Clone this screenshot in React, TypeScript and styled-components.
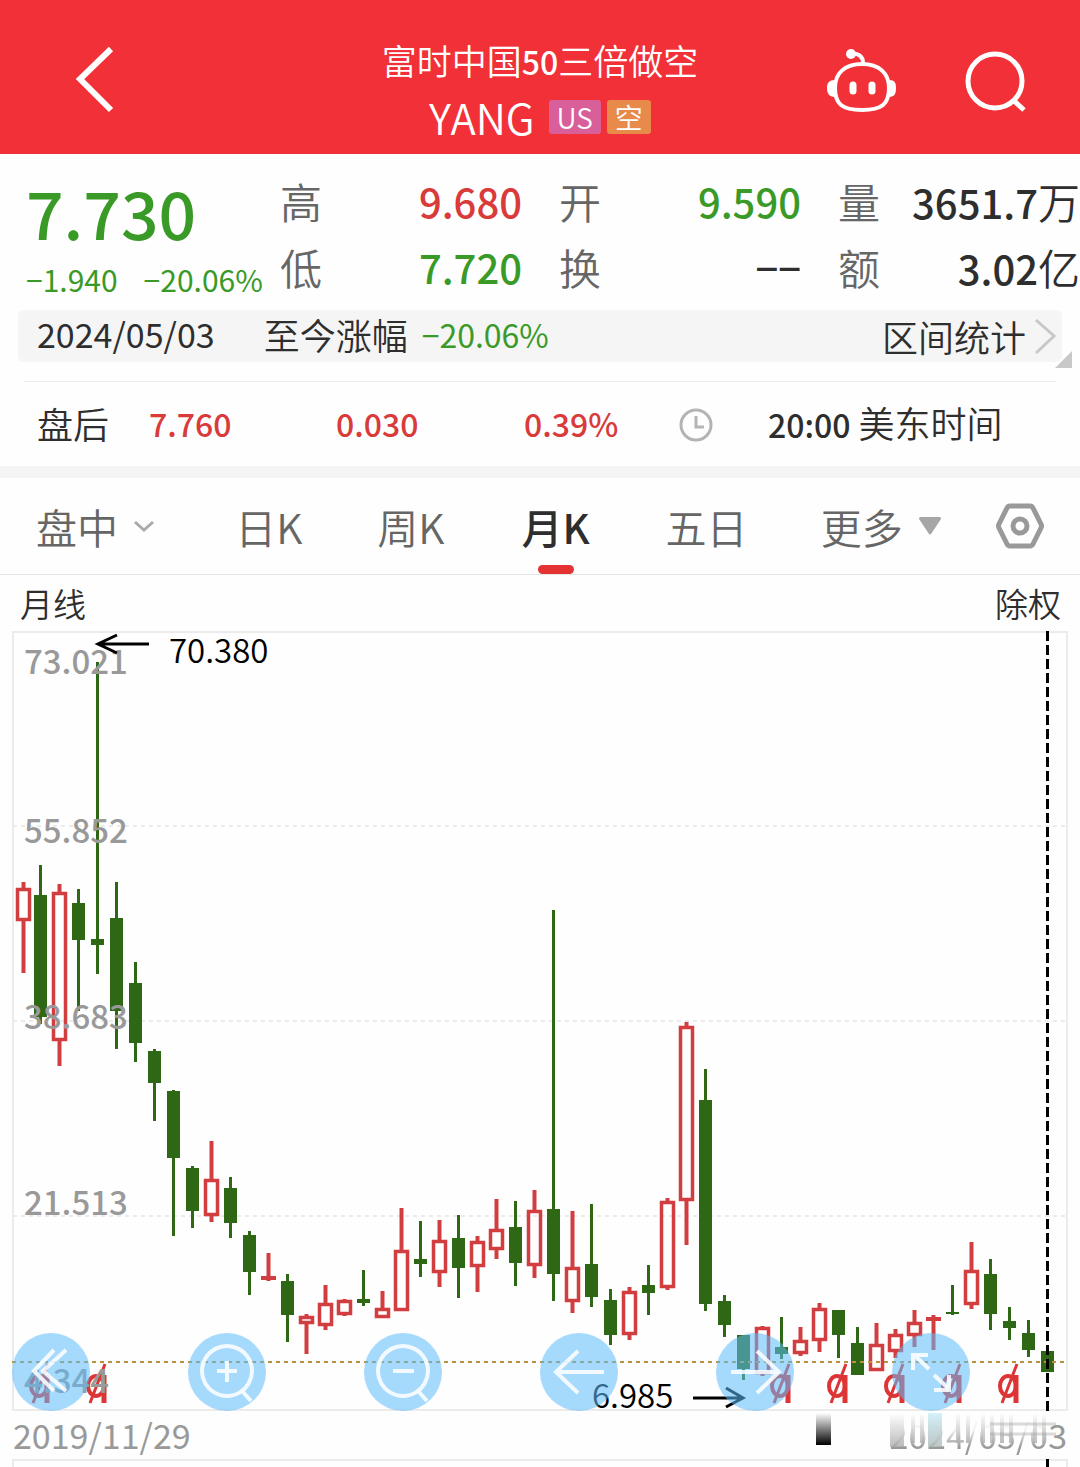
import React from "react";
import styled, { createGlobalStyle } from "styled-components";

const RED = "#d93a3a";
const GREEN = "#3a9a28";
const INK = "#2e2e2e";
const MUTED = "#666";

const GlobalStyle = createGlobalStyle`
  * { box-sizing: border-box; }
  body {
    margin: 0;
    background: #fefefe;
    color: ${INK};
    font-family: "Noto Sans CJK SC", "Noto Sans", sans-serif;
    font-weight: 350;
  }
  button {
    margin: 0;
    padding: 0;
    border: 0;
    background: none;
    color: inherit;
    font: inherit;
    cursor: pointer;
  }
  svg { display: block; }
`;

const Page = styled.div`
  width: 100%;
  overflow-x: hidden;
`;

/* ---------- header ---------- */

const Header = styled.header`
  display: grid;
  grid-template-columns: 1fr auto 1fr;
  align-items: center;
  height: 154px;
  padding: 8px 52px 0;
  background: #f23037;
  color: #fff;
`;

const BackArea = styled.div`
  padding-left: 20px;
`;

const HeaderActions = styled.div`
  display: flex;
  justify-content: flex-end;
  align-items: center;
  gap: 66px;
`;

const TitleBlock = styled.div`
  display: flex;
  flex-direction: column;
  align-items: center;
  padding-top: 18px;
`;

const Title = styled.h1`
  margin: 0;
  font-size: 35px;
  line-height: 52px;
  font-weight: 350;
`;

const TitleNumber = styled.span`
  font-size: 32px;
  font-weight: 500;
`;

const TickerRow = styled.div`
  display: flex;
  align-items: center;
  gap: 6px;
  height: 60px;
`;

const Ticker = styled.span`
  margin-right: 8px;
  font-size: 42px;
  line-height: 60px;
`;

const Badge = styled.span<{ $bg: string }>`
  padding: 0 8px;
  border-radius: 3px;
  background: ${(p) => p.$bg};
  font-size: 28px;
  line-height: 34px;
`;

/* ---------- quote ---------- */

const Quote = styled.section`
  display: grid;
  grid-template-columns: 280px 1fr;
  height: 156px;
  padding-top: 14px;
`;

const PriceBlock = styled.div`
  padding-left: 26px;
  color: ${GREEN};
  font-weight: 500;
  white-space: nowrap;
`;

const Price = styled.div`
  font-size: 66px;
  line-height: 86px;
`;

const Changes = styled.div`
  display: flex;
  gap: 26px;
  font-size: 30px;
  line-height: 50px;
  font-weight: 400;
`;

const Stats = styled.dl`
  display: grid;
  grid-template-columns: repeat(3, 1fr);
  grid-auto-rows: 66px;
  column-gap: 37px;
  margin: 0;
`;

const Stat = styled.div`
  display: flex;
  justify-content: space-between;
  align-items: center;
  white-space: nowrap;
`;

const StatLabel = styled.dt`
  color: ${MUTED};
  font-size: 42px;
  line-height: 66px;
`;

const StatValue = styled.dd<{ $color: string }>`
  margin: 0;
  color: ${(p) => p.$color};
  font-size: 40px;
  line-height: 66px;
  font-weight: 500;
`;

const Unit = styled.span`
  font-size: 42px;
  font-weight: 350;
`;

/* ---------- range bar ---------- */

const RangeArea = styled.div`
  position: relative;
  padding: 0 18px 19px;
`;

const RangeBar = styled.div`
  display: flex;
  align-items: center;
  height: 52px;
  padding: 0 6px 0 19px;
  border-radius: 6px;
  background: #f5f5f5;
  font-size: 36px;
  line-height: 48px;
`;

const RangeDate = styled.time`
  padding-bottom: 4px;
  margin-right: 49px;
  font-size: 34px;
  font-weight: 400;
`;

const RangeLabel = styled.span`
  padding-bottom: 4px;
`;

const RangeChange = styled.span`
  padding-bottom: 4px;
  margin-left: 14px;
  color: ${GREEN};
  font-size: 32px;
  font-weight: 400;
`;

const RangeButton = styled.button`
  display: flex;
  align-items: center;
  gap: 8px;
  margin-left: auto;
`;

const Corner = styled.span`
  position: absolute;
  right: 8px;
  top: 41px;
  border-left: 17px solid transparent;
  border-bottom: 17px solid #c8c8c8;
`;

const Divider = styled.hr`
  height: 1px;
  margin: 0 24px;
  border: 0;
  background: #ececec;
`;

const AfterHours = styled.section`
  display: grid;
  grid-template-columns: 112fr 187fr 188fr 155fr 89fr 312fr;
  align-items: center;
  height: 84px;
  padding-left: 37px;
  font-size: 36px;
  line-height: 80px;
  white-space: nowrap;

  & > span {
    padding-bottom: 4px;
  }
`;

const Figure = styled.span<{ $color?: string }>`
  color: ${(p) => p.$color ?? INK};
  font-size: 32px;
  font-weight: 500;
`;

const Band = styled.div`
  height: 12px;
  background: #f4f4f4;
`;

/* ---------- tabs ---------- */

const Tabs = styled.nav`
  display: grid;
  grid-template-columns: 199fr 142fr 144fr 144fr 155fr 175fr 48fr;
  align-items: center;
  height: 97px;
  padding: 0 36px;
  border-bottom: 1px solid #e4e4e4;
`;

const Tab = styled.button<{ $active?: boolean }>`
  position: relative;
  display: flex;
  align-items: center;
  justify-self: start;
  gap: 16px;
  height: 96px;
  color: ${(p) => (p.$active ? INK : MUTED)};
  font-size: 41px;
  font-weight: ${(p) => (p.$active ? 500 : 350)};
  line-height: 96px;
  white-space: nowrap;

  &::after {
    content: "";
    display: ${(p) => (p.$active ? "block" : "none")};
    position: absolute;
    left: calc(50% - 18px);
    bottom: 0;
    width: 36px;
    height: 9px;
    border-radius: 5px;
    background: #e53333;
  }
`;

/* ---------- chart ---------- */

const ChartCaption = styled.div`
  display: flex;
  justify-content: space-between;
  height: 56px;
  padding: 0 19px 0 20px;
  font-size: 33px;
  line-height: 57px;
`;

const ChartArea = styled.section`
  position: relative;
`;

const ChartSvg = styled.svg`
  width: 100%;
  height: auto;
  overflow: visible;
  font-family: "Noto Sans CJK SC", sans-serif;
`;

const Controls = styled.div`
  position: absolute;
  left: 12px;
  right: 110px;
  bottom: 0;
  display: flex;
  justify-content: space-between;
`;

const RoundButton = styled.button`
  width: 78px;
  height: 78px;
  border-radius: 50%;
  background: rgba(93, 188, 250, 0.55);
`;

const DateRow = styled.div`
  position: relative;
  display: flex;
  justify-content: space-between;
  height: 48px;
  padding: 0 13px;
  color: #999;
  font-size: 34px;
  font-weight: 400;
  line-height: 48px;
`;

const Faded = styled.span`
  display: inline-block;
  mask-image: linear-gradient(to bottom, rgba(0, 0, 0, 0.1) 40%, #000 75%);
`;

const Smear = styled.svg`
  position: absolute;
  right: 0;
  top: 0;
`;

type Candle = [up: 0 | 1, high: number, top: number, bottom: number, low: number];

const candles: Candle[] = [
  [1, 882, 888, 921, 973],
  [0, 865, 895, 1017, 1024],
  [1, 884, 892, 1041, 1066],
  [0, 889, 903, 940, 1011],
  [0, 662, 939, 945, 974],
  [0, 882, 918, 1011, 1049],
  [0, 962, 983, 1043, 1062],
  [0, 1049, 1051, 1083, 1121],
  [0, 1090, 1091, 1158, 1236],
  [0, 1166, 1168, 1211, 1228],
  [1, 1141, 1179, 1216, 1222],
  [0, 1177, 1188, 1223, 1238],
  [0, 1231, 1235, 1272, 1295],
  [1, 1253, 1276, 1280, 1281],
  [0, 1274, 1281, 1315, 1342],
  [1, 1314, 1316, 1324, 1354],
  [1, 1285, 1303, 1326, 1330],
  [1, 1299, 1300, 1315, 1316],
  [0, 1270, 1299, 1303, 1306],
  [1, 1291, 1308, 1318, 1318],
  [1, 1208, 1250, 1311, 1311],
  [0, 1221, 1259, 1264, 1277],
  [1, 1220, 1240, 1273, 1287],
  [0, 1215, 1238, 1268, 1298],
  [1, 1236, 1241, 1267, 1292],
  [1, 1199, 1229, 1250, 1259],
  [0, 1201, 1227, 1263, 1286],
  [1, 1190, 1210, 1266, 1278],
  [0, 910, 1209, 1274, 1301],
  [1, 1211, 1267, 1302, 1313],
  [0, 1204, 1264, 1297, 1307],
  [0, 1289, 1300, 1335, 1345],
  [1, 1287, 1291, 1335, 1340],
  [0, 1265, 1285, 1293, 1315],
  [1, 1198, 1201, 1288, 1290],
  [1, 1022, 1026, 1201, 1245],
  [0, 1069, 1100, 1304, 1311],
  [0, 1295, 1301, 1325, 1337],
  [0, 1335, 1335, 1369, 1380],
  [1, 1326, 1327, 1374, 1376],
  [0, 1317, 1347, 1354, 1359],
  [1, 1327, 1340, 1354, 1356],
  [1, 1303, 1308, 1341, 1352],
  [0, 1310, 1310, 1335, 1358],
  [0, 1327, 1343, 1375, 1375],
  [1, 1323, 1344, 1371, 1371],
  [1, 1329, 1334, 1352, 1358],
  [1, 1310, 1322, 1336, 1347],
  [1, 1315, 1317, 1321, 1350],
  [0, 1285, 1312, 1314, 1315],
  [1, 1242, 1270, 1305, 1309],
  [0, 1259, 1274, 1314, 1330],
  [0, 1307, 1321, 1328, 1340],
  [0, 1320, 1333, 1350, 1357],
  [0, 1351, 1351, 1372, 1372],
];

const axis: [string, number][] = [
  ["73.021", 674],
  ["55.852", 843],
  ["38.683", 1029],
  ["21.513", 1215],
  ["4.344", 1393],
];

const gridLines = [826, 1021, 1216];
const dividendMarks = [40, 97, 781, 838, 895, 952, 1009];
const streaks = [912, 921, 957, 967, 982, 991, 1001, 1010, 1034, 1043];

const candleX = (i: number) => Math.max(23, 21 + i * 19);

function CandleShape({ index, data }: { index: number; data: Candle }) {
  const [up, high, top, bottom, low] = data;
  const x = candleX(index);
  if (!up) {
    return (
      <g fill="#2f6814">
        <rect x={x - 1} y={high} width={3} height={low - high} />
        <rect x={x - 6} y={top} width={13} height={bottom - top} />
      </g>
    );
  }
  const h = bottom - top;
  return (
    <g fill="#d23e40">
      <rect x={x - 1.5} y={high} width={4} height={top - high} />
      <rect x={x - 1.5} y={bottom} width={4} height={low - bottom} />
      {h > 5 ? (
        <rect x={x - 5.5} y={top + 1.5} width={12} height={h - 3} fill="none" stroke="#d23e40" strokeWidth={3.5} />
      ) : (
        <rect x={x - 7} y={top} width={15} height={h} />
      )}
    </g>
  );
}

function Chart() {
  return (
    <ChartSvg viewBox="0 631 1080 780" role="img" aria-label="月线">
      <path d="M13 632H1067V1410H13Z" fill="none" stroke="#ebebeb" strokeWidth={2} />
      {gridLines.map((y) => (
        <path key={y} d={`M13 ${y}H1067`} stroke="#ebebeb" strokeWidth={2} strokeDasharray="4 4" />
      ))}
      {candles.map((c, i) => (
        <CandleShape key={i} index={i} data={c} />
      ))}
      <path d="M12 1362H1067" stroke="#b8923c" strokeWidth={2} strokeDasharray="4 4" />
      {dividendMarks.map((x) => (
        <g key={x} transform={`translate(${x} 1384)`} fill="none" stroke="#dd3535">
          <ellipse cx={-1} cy={2} rx={8} ry={10} strokeWidth={4} />
          <path d="M7 -9V19" strokeWidth={5} />
          <path d="M8 -20L-7 19" strokeWidth={3} />
        </g>
      ))}
      <path d="M1047.500 631V1411" stroke="#000" strokeWidth={3} strokeDasharray="10 4" />
      <g fill="#999" fontSize={33} fontWeight={500}>
        {axis.map(([label, y]) => (
          <text key={label} x={24} y={y}>
            {label}
          </text>
        ))}
      </g>
      <g fill="#000" fontSize={33} fontWeight={350}>
        <text x={169} y={663}>70.380</text>
        <text x={592} y={1408}>6.985</text>
      </g>
      <g fill="none" stroke="#000" strokeWidth={3}>
        <path d="M149 644H98M117 635L98 644L117 653" />
        <path d="M693 1398H743M726 1388L743 1398L726 1407" />
      </g>
    </ChartSvg>
  );
}

const controls: { label: string; icon: React.ReactNode }[] = [
  { label: "最早", icon: <path d="M42 17L22 38L42 58M54 17L31 38L54 58" /> },
  { label: "放大", icon: <path d="M39 13a25 25 0 1 0 0.010 0M55 59L63 68M39 28V49M29 38H49" /> },
  { label: "缩小", icon: <path d="M39 13a25 25 0 1 0 0.010 0M55 59L63 68M29 38H50" /> },
  { label: "左移", icon: <path d="M64 39H16M38 18L16 39L38 60" /> },
  { label: "右移", icon: <path d="M15 39H63M41 18L63 39L41 60" /> },
  { label: "全屏", icon: <path d="M37 36L22 22M36 22H21V37M37 36M42 42L57 56M42 57H57V42" /> },
];

export default function App() {
  return (
    <Page>
      <GlobalStyle />
      <Header>
        <BackArea>
          <button aria-label="返回">
            <svg width="44" height="70" viewBox="0 0 44 70" fill="none" stroke="#fff" strokeWidth="6">
              <path d="M39 5L8 35L39 66" />
            </svg>
          </button>
        </BackArea>
        <TitleBlock>
          <Title>
            富时中国<TitleNumber>50</TitleNumber>三倍做空
          </Title>
          <TickerRow>
            <Ticker>YANG</Ticker>
            <Badge $bg="#d95f9b">US</Badge>
            <Badge $bg="#e88a4a">空</Badge>
          </TickerRow>
        </TitleBlock>
        <HeaderActions>
          <button aria-label="智能助手">
            <svg width="72" height="66" viewBox="0 0 72 66" fill="none" stroke="#fff">
              <path d="M36 16C53 16 63 25 63 40C63 56 56 62 36 62C16 62 9 56 9 40C9 25 19 16 36 16Z" strokeWidth="4" />
              <path d="M25 6C32 5 37 8 37 15" strokeWidth="4" />
              <circle cx="25" cy="6" r="5" fill="#fff" stroke="none" />
              <path d="M27 37V43M46 37V43" strokeWidth="7" strokeLinecap="round" />
              <path d="M9 32C3 32 1 35 1 40C1 45 3 49 9 49ZM63 32C69 32 70 35 70 40C70 45 69 49 63 49Z" fill="#fff" stroke="none" />
            </svg>
          </button>
          <button aria-label="搜索">
            <svg width="64" height="64" viewBox="0 0 64 64" fill="none" stroke="#fff" strokeWidth="5">
              <circle cx="31" cy="32" r="27" />
              <path d="M49 51L60 61" />
            </svg>
          </button>
        </HeaderActions>
      </Header>

      <Quote>
        <PriceBlock>
          <Price>7.730</Price>
          <Changes>
            <span>−1.940</span>
            <span>−20.06%</span>
          </Changes>
        </PriceBlock>
        <Stats>
          <Stat>
            <StatLabel>高</StatLabel>
            <StatValue $color={RED}>9.680</StatValue>
          </Stat>
          <Stat>
            <StatLabel>开</StatLabel>
            <StatValue $color={GREEN}>9.590</StatValue>
          </Stat>
          <Stat>
            <StatLabel>量</StatLabel>
            <StatValue $color={INK}>
              3651.7<Unit>万</Unit>
            </StatValue>
          </Stat>
          <Stat>
            <StatLabel>低</StatLabel>
            <StatValue $color={GREEN}>7.720</StatValue>
          </Stat>
          <Stat>
            <StatLabel>换</StatLabel>
            <StatValue $color={INK}>−−</StatValue>
          </Stat>
          <Stat>
            <StatLabel>额</StatLabel>
            <StatValue $color={INK}>
              3.02<Unit>亿</Unit>
            </StatValue>
          </Stat>
        </Stats>
      </Quote>

      <RangeArea>
        <RangeBar>
          <RangeDate>2024/05/03</RangeDate>
          <RangeLabel>至今涨幅</RangeLabel>
          <RangeChange>−20.06%</RangeChange>
          <RangeButton>
            区间统计
            <svg width="22" height="38" viewBox="0 0 22 38" fill="none" stroke="#c8c8c8" strokeWidth="3">
              <path d="M2 3L20 19L2 36" />
            </svg>
          </RangeButton>
        </RangeBar>
        <Corner />
      </RangeArea>
      <Divider />
      <AfterHours>
        <span>盘后</span>
        <Figure $color={RED}>7.760</Figure>
        <Figure $color={RED}>0.030</Figure>
        <Figure $color={RED}>0.39%</Figure>
        <svg width="34" height="34" viewBox="0 0 34 34" fill="none" stroke="#b4b4b4" strokeWidth="3">
          <circle cx="17" cy="17" r="15" />
          <path d="M17 8V19H25" />
        </svg>
        <span>
          <Figure>20:00</Figure> 美东时间
        </span>
      </AfterHours>
      <Band />

      <Tabs>
        <Tab aria-haspopup="menu">
          盘中
          <svg width="20" height="12" viewBox="0 0 20 12" fill="none" stroke="#aaa" strokeWidth="3">
            <path d="M1 2L10 10L19 2" />
          </svg>
        </Tab>
        <Tab>日K</Tab>
        <Tab>周K</Tab>
        <Tab $active aria-current="true">
          月K
        </Tab>
        <Tab>五日</Tab>
        <Tab aria-haspopup="menu">
          更多
          <svg width="22" height="18" viewBox="0 0 22 18" fill="#a6a6a6">
            <path d="M1 0H21Q22 0 22 2L12 17Q11 18 10 17L0 2Q0 0 1 0Z" />
          </svg>
        </Tab>
        <Tab aria-label="设置">
          <svg width="48" height="46" viewBox="0 0 48 46" fill="none" stroke="#999" strokeWidth="5" strokeLinejoin="round">
            <path d="M14 3H34Q36 3 37 5L45 21Q46 23 45 25L37 41Q36 43 34 43H14Q12 43 11 41L3 25Q2 23 3 21L11 5Q12 3 14 3Z" />
            <circle cx="24" cy="23" r="7" />
          </svg>
        </Tab>
      </Tabs>

      <ChartCaption>
        <span>月线</span>
        <span>除权</span>
      </ChartCaption>
      <ChartArea>
        <Chart />
        <Controls>
          {controls.map((c) => (
            <RoundButton key={c.label} aria-label={c.label}>
              <svg width="78" height="78" viewBox="0 0 78 78" fill="none" stroke="#fff" strokeOpacity="0.85" strokeWidth="4">
                {c.icon}
              </svg>
            </RoundButton>
          ))}
        </Controls>
      </ChartArea>
      <DateRow>
        <time>2019/11/29</time>
        <time>
          <Faded>2024/05/0</Faded>3
        </time>
        <Smear width="340" height="48" viewBox="740 0 340 48" aria-hidden="true">
          <defs>
            <linearGradient id="dark" x1="0" y1="0" x2="0" y2="1">
              <stop offset="0" stopColor="#fff" />
              <stop offset="1" stopColor="#000" />
            </linearGradient>
            <linearGradient id="grey" x1="0" y1="0" x2="0" y2="1">
              <stop offset="0" stopColor="#fff" stopOpacity="0.8" />
              <stop offset="1" stopColor="#aaa" stopOpacity="0.8" />
            </linearGradient>
            <linearGradient id="teal" x1="0" y1="0" x2="0" y2="1">
              <stop offset="0" stopColor="#d3f2fb" />
              <stop offset="1" stopColor="#b0baba" stopOpacity="0.8" />
            </linearGradient>
          </defs>
          <rect x="816" y="2" width="15" height="32" fill="url(#dark)" />
          <rect x="890" y="2" width="14" height="34" fill="url(#grey)" />
          <rect x="928" y="2" width="14" height="34" fill="url(#teal)" />
          {streaks.map((x) => (
            <rect key={x} x={x - 1} y="2" width="4" height="30" fill="url(#grey)" />
          ))}
          <path d="M990 13H1056M990 23H1056" stroke="#999" strokeOpacity="0.35" strokeWidth="3" />
        </Smear>
      </DateRow>
      <ChartSvg viewBox="0 0 1080 8" aria-hidden="true">
        <path d="M13 8V1H1067V8" fill="none" stroke="#ebebeb" strokeWidth={2} />
        <path d="M1047.500 0V8" stroke="#000" strokeWidth={3} />
      </ChartSvg>
    </Page>
  );
}
